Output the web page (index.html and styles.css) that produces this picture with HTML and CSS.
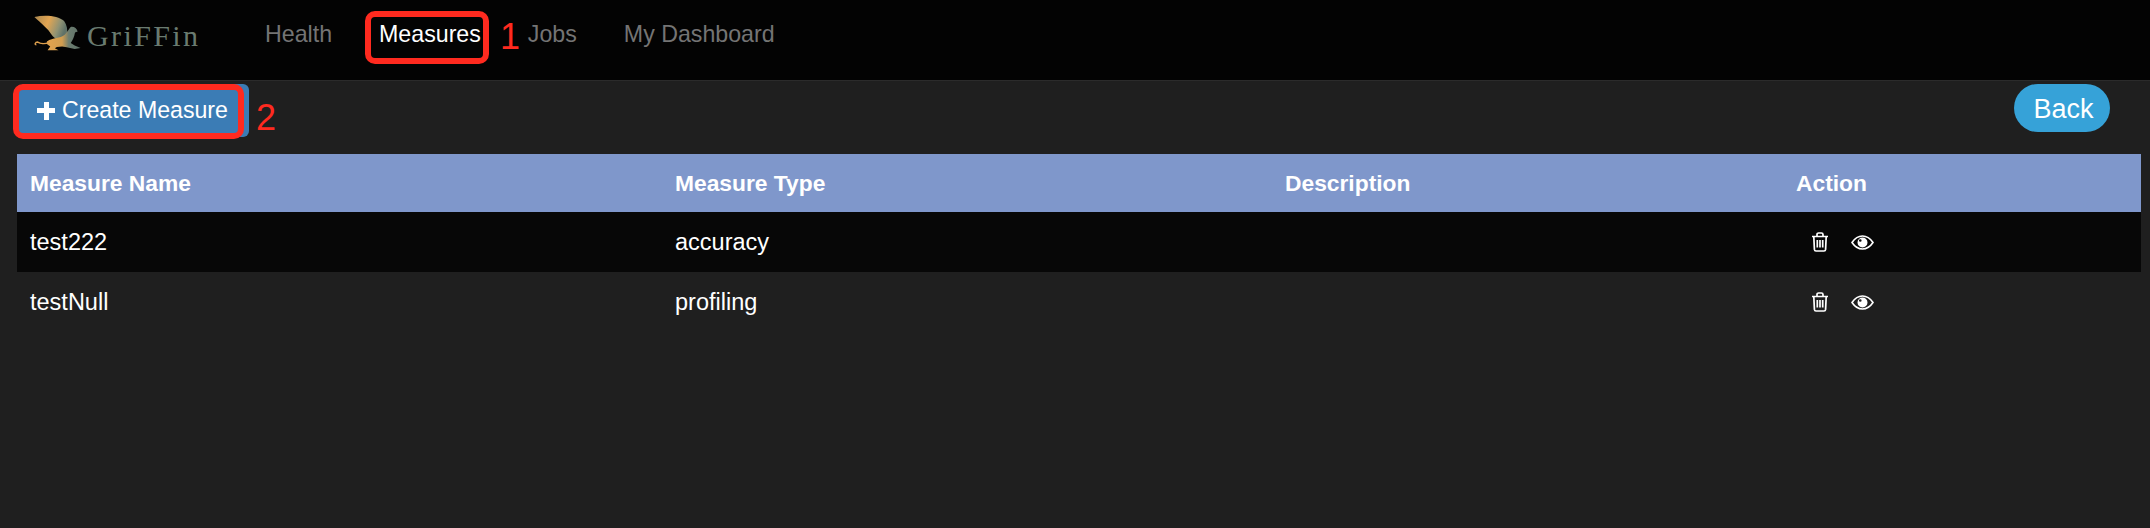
FILE: index.html
```html
<!DOCTYPE html>
<html>

<head>
    <meta charset="UTF-8">
    <title>Griffin Measures</title>
    <link rel="stylesheet" href="styles.css">
</head>

<body>
    <nav class="navbar">
        <a class="brand">
            <svg class="brand-mark" viewBox="28 15 140 115" width="47" height="38">
                <defs>
                    <linearGradient id="wing" x1="0" y1="0" x2="1" y2="0.300">
                        <stop offset="0" stop-color="#a9874f" />
                        <stop offset="0.450" stop-color="#e2a552" />
                        <stop offset="0.800" stop-color="#8f9274" />
                        <stop offset="1" stop-color="#5f7268" />
                    </linearGradient>
                    <linearGradient id="body" x1="0" y1="0" x2="1" y2="0">
                        <stop offset="0" stop-color="#e4a44e" />
                        <stop offset="0.450" stop-color="#d19d50" />
                        <stop offset="0.650" stop-color="#6c7d70" />
                        <stop offset="1" stop-color="#5f7268" />
                    </linearGradient>
                </defs>
                <path fill="url(#wing)" d="M28 24C60 16 100 20 118 36C126 48 129 60 127 78L108 98C95 94 85 85 78 75C70 60 50 45 28 24Z" />
                <path fill="url(#body)" d="M66 98C85 86 105 90 120 78C128 68 133 60 138 54C148 52 156 58 159 68L151 71C149 84 144 94 138 103L150 110L168 118L150 121L126 116L112 113L96 115L90 119L101 125L68 125L76 113L66 106Z" />
                <path fill="none" stroke="#dd9f4d" stroke-width="4.500" d="M72 100C60 108 45 104 38 100C30 100 28 108 34 108" />
            </svg>
            <span class="brand-name">GriFFin</span>
        </a>
        <a class="nav-link">Health</a>
        <a class="nav-link active">Measures</a>
        <a class="nav-link">Jobs</a>
        <a class="nav-link">My Dashboard</a>
    </nav>

    <div class="toolbar">
        <a class="btn-create"><span class="plus"></span>Create Measure</a>
        <a class="btn-back">Back</a>
    </div>

    <table class="measures">
        <thead>
            <tr>
                <th class="c-name">Measure Name</th>
                <th class="c-type">Measure Type</th>
                <th class="c-desc">Description</th>
                <th>Action</th>
            </tr>
        </thead>
        <tbody>
            <tr>
                <td>test222</td>
                <td>accuracy</td>
                <td></td>
                <td class="actions">
                    <svg class="ico-trash" viewBox="0 0 18 20" width="18" height="20">
                        <path d="M1 4.500H17M6 4.500V2.600C6 1.700 6.700 1 7.600 1H10.400C11.300 1 12 1.700 12 2.600V4.500M2.800 4.500L3.400 17.400C3.500 18.400 4.100 19 5 19H13C13.900 19 14.500 18.400 14.600 17.400L15.200 4.500M6.300 8V15.500M9 8V15.500M11.700 8V15.500" />
                    </svg>
                    <svg class="ico-eye" viewBox="0 0 23 15" width="23" height="15">
                        <path class="eye-lid" d="M1 7.500C4 3 7.500 1 11.500 1S19 3 22 7.500C19 12 15.500 14 11.500 14S4 12 1 7.500Z" />
                        <path class="eye-ball" fill-rule="evenodd" d="M11.500 2.500A5 5 0 1 0 11.500 12.500A5 5 0 1 0 11.500 2.500ZM9.300 4.200A1.300 1.300 0 1 1 9.300 6.800A1.300 1.300 0 1 1 9.300 4.200Z" />
                    </svg>
                </td>
            </tr>
            <tr>
                <td>testNull</td>
                <td>profiling</td>
                <td></td>
                <td class="actions">
                    <svg class="ico-trash" viewBox="0 0 18 20" width="18" height="20">
                        <path d="M1 4.500H17M6 4.500V2.600C6 1.700 6.700 1 7.600 1H10.400C11.300 1 12 1.700 12 2.600V4.500M2.800 4.500L3.400 17.400C3.500 18.400 4.100 19 5 19H13C13.900 19 14.500 18.400 14.600 17.400L15.200 4.500M6.300 8V15.500M9 8V15.500M11.700 8V15.500" />
                    </svg>
                    <svg class="ico-eye" viewBox="0 0 23 15" width="23" height="15">
                        <path class="eye-lid" d="M1 7.500C4 3 7.500 1 11.500 1S19 3 22 7.500C19 12 15.500 14 11.500 14S4 12 1 7.500Z" />
                        <path class="eye-ball" fill-rule="evenodd" d="M11.500 2.500A5 5 0 1 0 11.500 12.500A5 5 0 1 0 11.500 2.500ZM9.300 4.200A1.300 1.300 0 1 1 9.300 6.800A1.300 1.300 0 1 1 9.300 4.200Z" />
                    </svg>
                </td>
            </tr>
        </tbody>
    </table>

    <!-- anotacoes vermelhas por cima da tela -->
    <div class="mark mark-nav"></div>
    <div class="mark mark-create"></div>
    <span class="mark-num num-1">1</span>
    <span class="mark-num num-2">2</span>
</body>

</html>
```

FILE: styles.css
```css
html,
body {
    margin: 0;
    height: 100%;
    background-color: #1f1f1f;
    color: #fff;
    font-family: "Liberation Sans", Arial, sans-serif;
    overflow: hidden;
}

body {
    position: relative;
}

/* Barra superior */

.navbar {
    display: flex;
    align-items: center;
    gap: 47px;
    height: 80px;
    padding-left: 34px;
    background: #030303;
    border-bottom: 1px solid #2b2b2b;
    font-size: 23.200px;
}

.brand {
    display: flex;
    align-items: center;
    gap: 6px;
    width: 184px;
    margin-top: -14px;
}

.brand-name {
    margin-top: 5px;
    font-family: "Liberation Serif", serif;
    font-size: 30px;
    letter-spacing: 2.400px;
    color: #6a7b70;
}

.nav-link {
    color: #747474;
    margin-top: -12px;
}

.nav-link.active {
    color: #fff;
}

/* Botoes */

.toolbar {
    display: flex;
    justify-content: space-between;
    align-items: flex-start;
    height: 73px;
    padding: 3px 40px 0 19px;
    box-sizing: border-box;
}

.btn-create {
    display: flex;
    align-items: center;
    justify-content: center;
    gap: 7px;
    width: 230px;
    height: 53px;
    padding-right: 3px;
    box-sizing: border-box;
    background: #3b7cb5;
    border-radius: 6px;
    font-size: 23.150px;
}

.plus {
    width: 18px;
    height: 18px;
    background:
        linear-gradient(#fff, #fff) center / 18px 5px no-repeat,
        linear-gradient(#fff, #fff) center / 5px 18px no-repeat;
}

.btn-back {
    display: flex;
    align-items: center;
    justify-content: center;
    width: 96px;
    height: 48px;
    padding: 2px 0 0 3px;
    box-sizing: border-box;
    background: #36a2d8;
    border-radius: 24px;
    font-size: 27px;
}

/* Tabela */

.measures {
    width: 2124px;
    margin-left: 17px;
    border-collapse: collapse;
    table-layout: fixed;
    font-size: 23.500px;
}

.measures th {
    height: 58px;
    padding: 0 14px;
    background: #7f97cb;
    font-size: 22.800px;
    text-align: left;
}

.measures td {
    height: 60px;
    padding: 0 14px;
}

.measures tr > :first-child {
    padding-left: 13px;
}

.measures tbody tr:nth-child(odd) {
    background: #070707;
}

.c-name {
    width: 617px;
}

.c-type {
    width: 582px;
}

.c-desc {
    width: 483px;
}

.actions svg {
    vertical-align: middle;
    margin-bottom: 2px;
}

.ico-trash {
    margin-left: 15px;
    fill: none;
    stroke: #fff;
    stroke-width: 1.700;
}

.ico-eye {
    margin-left: 15px;
}

.eye-lid {
    fill: none;
    stroke: #fff;
    stroke-width: 1.600;
}

.eye-ball {
    fill: #fff;
}

/* Anotacoes */

.mark {
    position: absolute;
    box-sizing: border-box;
    border: 6px solid #ff2a1f;
    border-radius: 10px;
}

.mark-nav {
    left: 365px;
    top: 11px;
    width: 124px;
    height: 53px;
}

.mark-create {
    left: 13px;
    top: 84px;
    width: 231px;
    height: 55px;
}

.mark-num {
    position: absolute;
    color: #ff2a1f;
    font-size: 36px;
    line-height: 36px;
}

.num-1 {
    left: 500px;
    top: 19px;
}

.num-2 {
    left: 256px;
    top: 100px;
}
```
